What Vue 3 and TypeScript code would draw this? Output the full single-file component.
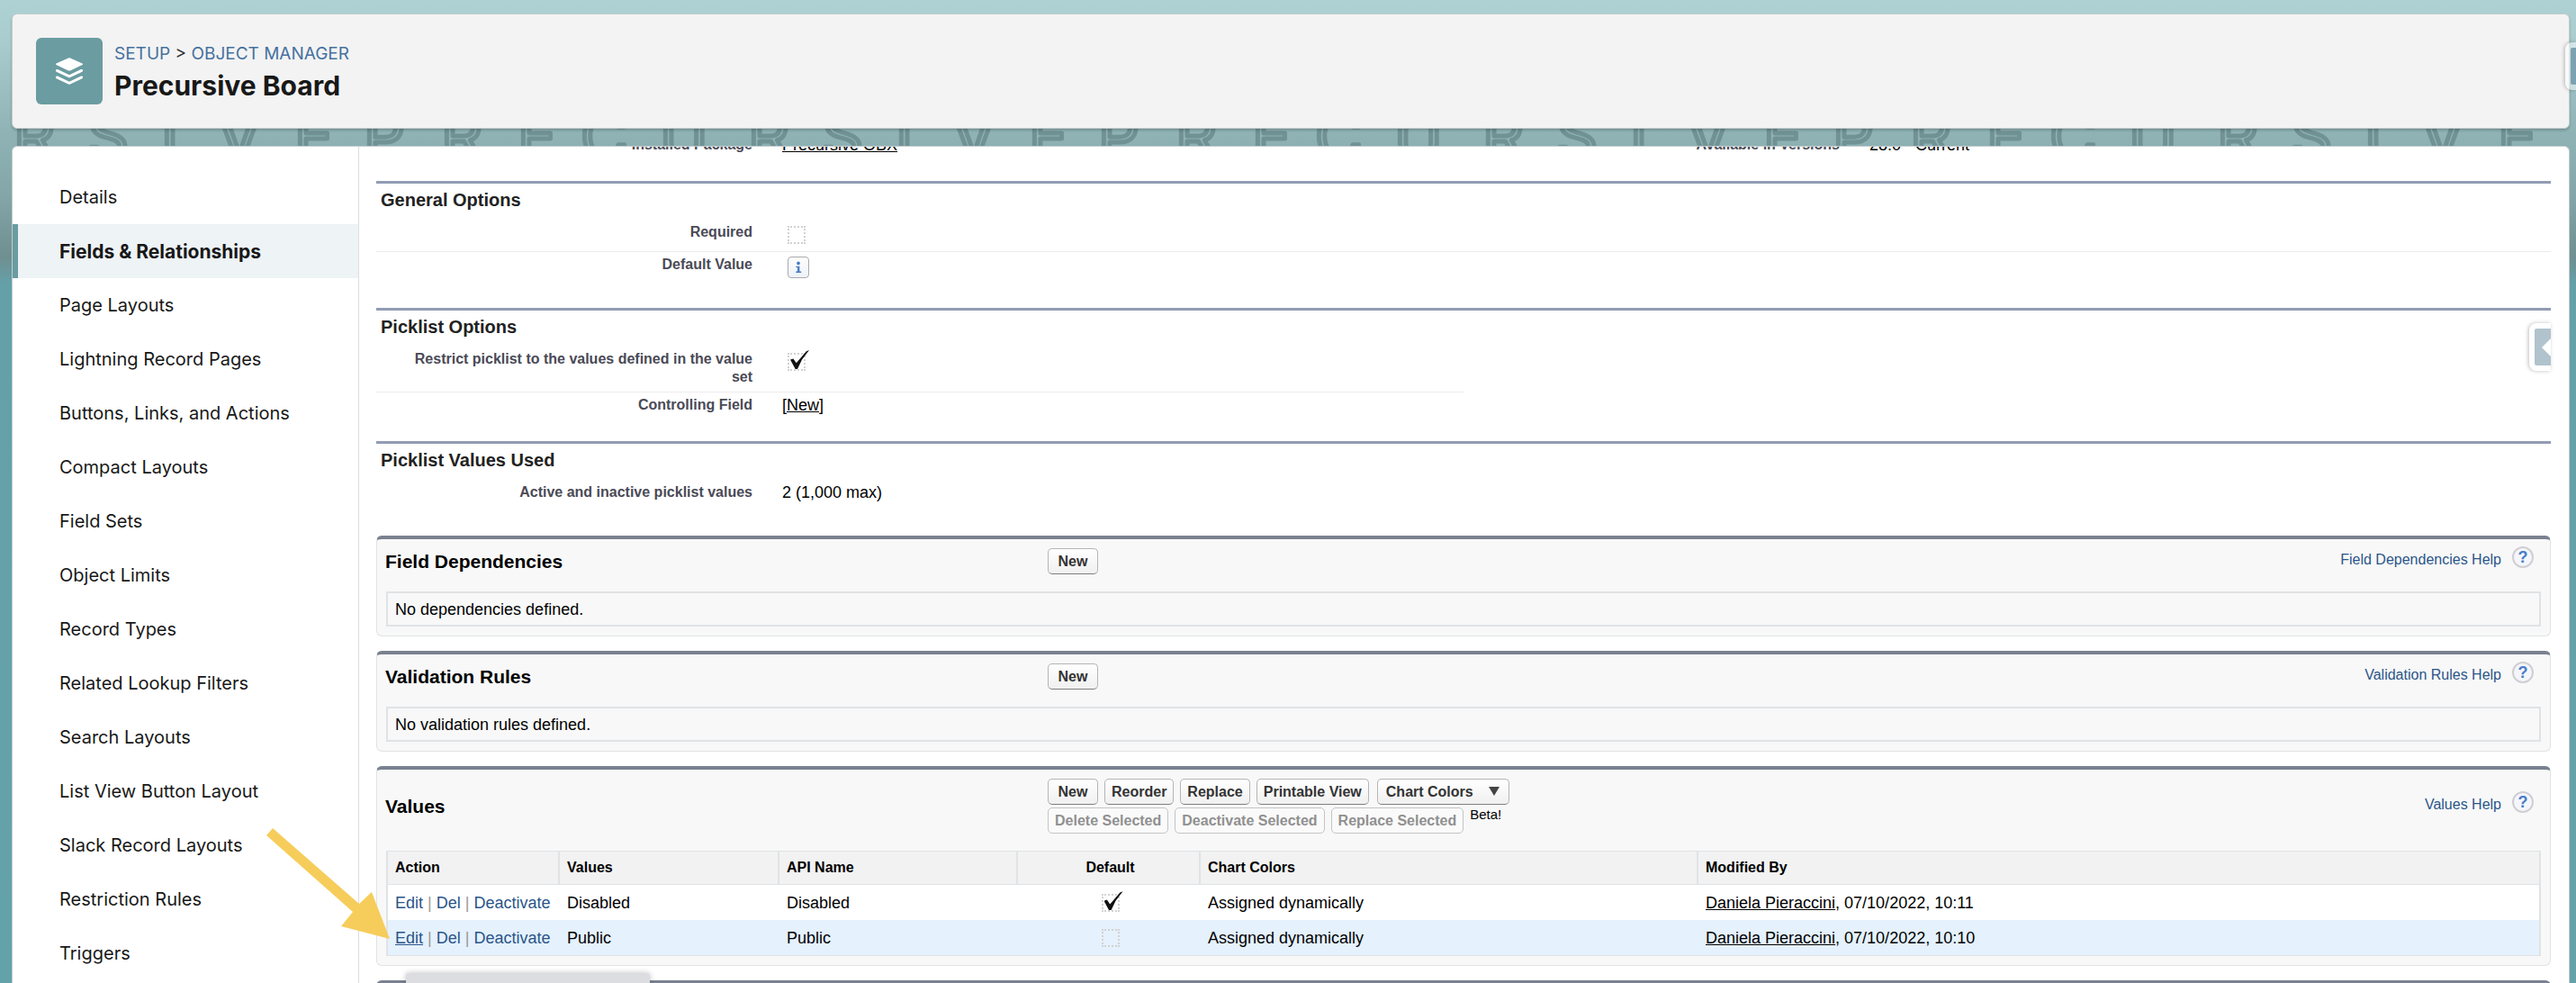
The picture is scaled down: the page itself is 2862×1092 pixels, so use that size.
<script setup lang="ts">
interface Button {
  label: string
  disabled?: boolean
  menu?: boolean
}

interface PicklistValue {
  name: string
  api: string
  isDefault: boolean
  modified: string
  active: boolean
}

const navItems: string[] = [
  'Details',
  'Fields & Relationships',
  'Page Layouts',
  'Lightning Record Pages',
  'Buttons, Links, and Actions',
  'Compact Layouts',
  'Field Sets',
  'Object Limits',
  'Record Types',
  'Related Lookup Filters',
  'Search Layouts',
  'List View Button Layout',
  'Slack Record Layouts',
  'Restriction Rules',
  'Triggers',
]
const currentItem = 'Fields & Relationships'

const emptyLists = [
  { title: 'Field Dependencies', message: 'No dependencies defined.' },
  { title: 'Validation Rules', message: 'No validation rules defined.' },
]

const valueButtons: Button[][] = [
  [
    { label: 'New' },
    { label: 'Reorder' },
    { label: 'Replace' },
    { label: 'Printable View' },
    { label: 'Chart Colors', menu: true },
  ],
  [
    { label: 'Delete Selected', disabled: true },
    { label: 'Deactivate Selected', disabled: true },
    { label: 'Replace Selected', disabled: true },
  ],
]

const values: PicklistValue[] = [
  { name: 'Disabled', api: 'Disabled', isDefault: true, modified: '07/10/2022, 10:11', active: false },
  { name: 'Public', api: 'Public', isDefault: false, modified: '07/10/2022, 10:10', active: true },
]
</script>

<template>
  <div class="page">
    <header class="header">
      <span class="app-icon">
        <svg viewBox="0 0 32 32" width="32" height="32" fill="#fff" aria-hidden="true">
          <path d="M15 1.400Q16 1 17 1.400L30.500 7.500Q31.800 8.300 30.500 9.100L17 15.400Q16 15.800 15 15.400L1.500 9.100Q.2 8.300 1.500 7.500Z" />
          <path d="M3 14L16 20.200L29 14Q30.200 13.600 31 14.600Q31.500 16 30.400 16.700L17 23Q16 23.400 15 23L1.600 16.700Q.5 16 1 14.600Q1.800 13.600 3 14Z" />
          <path d="M3 21.500L16 27.700L29 21.500Q30.200 21.100 31 22.100Q31.500 23.500 30.400 24.200L17 30.500Q16 30.900 15 30.500L1.600 24.200Q.5 23.500 1 22.100Q1.800 21.100 3 21.500Z" />
        </svg>
      </span>
      <div class="heading">
        <nav class="crumbs" aria-label="Breadcrumb">
          <a href="#setup">SETUP</a> &gt; <a href="#objects">OBJECT MANAGER</a>
        </nav>
        <h1>Precursive Board</h1>
      </div>
      <button class="edge-tab header-tab" type="button" aria-label="Open panel"><span></span></button>
    </header>

    <div class="band" aria-hidden="true">
      <svg width="100%" height="19">
        <defs>
          <pattern id="wordmark" width="816" height="80" x="-12" patternUnits="userSpaceOnUse">
            <text y="34" x="14 96 178 240 326 403 489 574 644 732">RSIVEPRECU</text>
          </pattern>
        </defs>
        <rect width="100%" height="19" fill="url(#wordmark)" />
      </svg>
    </div>

    <div class="main">
      <nav class="sidebar" aria-label="Object settings">
        <a
          v-for="item in navItems"
          :key="item"
          href="#"
          :class="{ current: item === currentItem }"
          >{{ item }}</a
        >
      </nav>

      <main class="content">
        <div class="scrolled">
          <section class="details first">
            <div class="row">
              <div class="pair">
                <span class="label">Installed Package</span>
                <span class="value"><a class="plain" href="#package">Precursive OBX</a></span>
              </div>
              <div class="pair">
                <span class="label">Available in Versions</span>
                <span class="value">28.0 - Current</span>
              </div>
            </div>
          </section>

          <section class="details">
            <h3>General Options</h3>
            <div class="row">
              <div class="pair">
                <label class="label" for="required">Required</label>
                <span class="value control"><input id="required" type="checkbox" disabled /></span>
              </div>
            </div>
            <div class="row">
              <div class="pair">
                <span class="label">Default Value</span>
                <span class="value control">
                  <button class="info" type="button" aria-label="Default value info">
                    <svg viewBox="0 0 24 24" width="22" height="22" fill="#4a7cc4" aria-hidden="true">
                      <circle cx="12" cy="7" r="2" />
                      <path d="M9 10.500H13.500V17H15.500V18.500H9V17H10.800V12H9Z" />
                    </svg>
                  </button>
                </span>
              </div>
            </div>
          </section>

          <section class="details">
            <h3>Picklist Options</h3>
            <div class="row half">
              <div class="pair">
                <label class="label" for="restrict">Restrict picklist to the values defined in the value set</label>
                <span class="value control"><input id="restrict" type="checkbox" checked disabled /></span>
              </div>
            </div>
            <div class="row half">
              <div class="pair">
                <span class="label">Controlling Field</span>
                <span class="value">[<a class="plain" href="#new">New</a>]</span>
              </div>
            </div>
          </section>

          <section class="details">
            <h3>Picklist Values Used</h3>
            <div class="row">
              <div class="pair">
                <span class="label">Active and inactive picklist values</span>
                <span class="value">2 (1,000 max)</span>
              </div>
            </div>
          </section>

          <div class="cards">
            <section v-for="list in emptyLists" :key="list.title" class="card">
              <div class="card-head">
                <h2>{{ list.title }}</h2>
                <div class="buttons"><button class="btn" type="button">New</button></div>
                <a class="help" href="#help">{{ list.title }} Help <span class="help-icon">?</span></a>
              </div>
              <p class="empty">{{ list.message }}</p>
            </section>

            <section class="card">
              <div class="card-head">
                <h2>Values</h2>
                <div class="button-rows">
                  <div v-for="(group, i) in valueButtons" :key="i" class="buttons">
                    <button
                      v-for="b in group"
                      :key="b.label"
                      class="btn"
                      :class="{ menu: b.menu }"
                      type="button"
                      :disabled="b.disabled"
                      :aria-haspopup="b.menu ? 'menu' : undefined"
                    >
                      {{ b.label }}
                      <svg v-if="b.menu" viewBox="0 0 14 11" width="14" height="11" aria-hidden="true">
                        <path d="M1 0H13L7 10Z" fill="#444" />
                      </svg>
                    </button>
                    <span v-if="i === 1" class="beta">Beta!</span>
                  </div>
                </div>
                <a class="help" href="#help">Values Help <span class="help-icon">?</span></a>
              </div>
              <table>
                <colgroup>
                  <col class="c-action" />
                  <col class="c-values" />
                  <col class="c-api" />
                  <col class="c-default" />
                  <col class="c-colors" />
                  <col />
                </colgroup>
                <thead>
                  <tr>
                    <th scope="col">Action</th>
                    <th scope="col">Values</th>
                    <th scope="col">API Name</th>
                    <th scope="col" class="center">Default</th>
                    <th scope="col">Chart Colors</th>
                    <th scope="col">Modified By</th>
                  </tr>
                </thead>
                <tbody>
                  <tr v-for="v in values" :key="v.api" :class="{ active: v.active }">
                    <td class="actions">
                      <a href="#edit">Edit</a> <i>|</i> <a href="#del">Del</a> <i>|</i> <a href="#deactivate">Deactivate</a>
                    </td>
                    <td>{{ v.name }}</td>
                    <td>{{ v.api }}</td>
                    <td class="center">
                      <input type="checkbox" :checked="v.isDefault" disabled :aria-label="`${v.name} is default`" />
                    </td>
                    <td>Assigned dynamically</td>
                    <td><a class="plain" href="#user">Daniela Pieraccini</a>, {{ v.modified }}</td>
                  </tr>
                </tbody>
              </table>
            </section>

            <section class="card next"></section>
          </div>
        </div>
        <button class="edge-tab content-tab" type="button" aria-label="Open help panel">
          <span>
            <svg viewBox="0 0 10 20" width="10" height="20" aria-hidden="true"><path d="M10 0V20L0 10Z" fill="#fff" /></svg>
          </span>
        </button>
      </main>
    </div>

    <div class="status"></div>

    <svg class="arrow" viewBox="0 0 138 124" width="138" height="124" aria-hidden="true">
      <path d="M7 0L103 84L117 71L137 123L83 109L96 93L0 8Z" fill="#f6cd5b" />
    </svg>
  </div>
</template>

<style>
body {
  margin: 0;
}
</style>

<style scoped>
.page {
  position: relative;
  box-sizing: border-box;
  display: flex;
  flex-direction: column;
  height: 100vh;
  overflow: hidden;
  padding: 15px 7px 0 13px;
  color: #000;
  font-family: 'Liberation Sans', Arial, sans-serif;
  font-size: 18px;
  line-height: 20px;
  background: linear-gradient(#aed2d4 0, #aacdcf 40px, #8fb3b5 150px, #83a5a8 220px, #6f8f90 285px, #64a0a8 315px, #64a2aa 100%);
}

a {
  color: #2a5589;
  text-decoration: none;
}

.plain {
  color: #000;
  text-decoration: underline;
}

.header {
  position: relative;
  z-index: 1;
  display: flex;
  align-items: center;
  gap: 13px;
  flex: none;
  box-sizing: border-box;
  height: 128px;
  padding-left: 26px;
  border: 1px solid #c3cccd;
  border-radius: 6px;
  background: #f3f3f3;
  box-shadow: 0 2px 3px rgba(0, 0, 0, 0.2);
}

.app-icon {
  display: grid;
  place-items: center;
  width: 74px;
  height: 74px;
  border-radius: 6px;
  background: #6a9ca1;
}

.heading {
  padding-top: 2px;
  font-family: Inter, sans-serif;
}

.crumbs {
  color: #333;
  font-size: 19px;
  line-height: 28px;
}

.crumbs a {
  color: #46719f;
}

h1 {
  margin: 1px 0 0;
  color: #181818;
  font-size: 30px;
  font-weight: 700;
  line-height: 40px;
}

.edge-tab {
  position: absolute;
  box-sizing: border-box;
  height: 53px;
  padding: 6px 0 6px 6px;
  border: 0;
  border-radius: 8px 0 0 8px;
  background: #fff;
  box-shadow: -1px 0 4px rgba(0, 0, 0, 0.25);
}

.edge-tab span {
  display: flex;
  align-items: center;
  justify-content: flex-end;
  height: 41px;
  border-radius: 2px 0 0 2px;
  background: #b1c3cd;
}

.header-tab {
  top: 31px;
  right: -8px;
  width: 12px;
  background: rgba(255, 255, 255, 0.5);
}

.header-tab span {
  background: #7ba2b1;
}

.content-tab {
  top: 196px;
  right: 20px;
  width: 24px;
}

.band {
  flex: none;
  height: 19px;
  overflow: hidden;
}

.band svg {
  display: block;
}

.band text {
  fill: none;
  stroke: #719295;
  stroke-width: 5px;
  stroke-linejoin: round;
  font-family: Inter, sans-serif;
  font-size: 72px;
  font-weight: 400;
}

.main {
  display: flex;
  flex: 1;
  min-height: 0;
  border: 1px solid #c3cccd;
  border-bottom: 0;
  border-radius: 6px 6px 0 0;
  background: #fff;
}

.sidebar {
  flex: none;
  box-sizing: border-box;
  width: 385px;
  padding-top: 26px;
  border-right: 1px solid #dddddf;
  overflow: hidden;
}

.sidebar a {
  display: block;
  box-sizing: border-box;
  height: 60px;
  padding-left: 46px;
  border-left: 6px solid transparent;
  color: #181818;
  font-family: Inter, sans-serif;
  font-size: 20px;
  line-height: 61px;
}

.sidebar a.current {
  border-left-color: #6a9ca1;
  background: #eef3f6;
  font-size: 21px;
  font-weight: 700;
}

.content {
  position: relative;
  flex: 1;
  min-width: 0;
  padding: 0 20px 0 19px;
  overflow: hidden;
}

.scrolled {
  margin-top: -16px;
}

.details {
  padding-bottom: 24px;
  border-top: 3px solid #929cb3;
}

.details.first {
  border-top: 0;
}

h3 {
  margin: 0;
  padding: 8px 5px 12px;
  color: #222;
  font-size: 20px;
  line-height: 20px;
}

.row {
  display: flex;
  padding: 4px 0 6px;
  border-bottom: 1px solid #ececec;
}

.row:last-child {
  border-bottom: 0;
}

.row.half {
  width: 50%;
}

.pair {
  display: flex;
  flex: none;
  width: 50%;
}

.half .pair {
  width: 100%;
}

.label {
  box-sizing: border-box;
  flex: none;
  width: 418px;
  padding-left: 20px;
  color: #4a4a56;
  font-size: 16px;
  font-weight: 700;
  text-align: right;
}

.value {
  padding-left: 33px;
}

.control {
  display: flex;
  align-items: flex-start;
  padding: 0 0 2px 39px;
}

input[type='checkbox'] {
  display: inline-block;
  appearance: none;
  box-sizing: border-box;
  width: 20px;
  height: 20px;
  margin: 3px 0 0;
  border: 2px dotted #d2d2d2;
  vertical-align: middle;
}

td input[type='checkbox'] {
  margin: 0;
}

input[type='checkbox']:checked {
  position: relative;
}

input[type='checkbox']:checked::after {
  content: '';
  position: absolute;
  left: 1px;
  top: -5px;
  width: 21px;
  height: 21px;
  background: #111;
  clip-path: polygon(0 50%, 16% 45%, 32% 68%, 85% 6%, 100% 0, 62% 50%, 38% 100%, 27% 100%);
}

.info {
  display: grid;
  place-items: center;
  width: 24px;
  height: 24px;
  margin: 1px 0;
  padding: 0;
  border: 1px solid #aaa;
  border-radius: 4px;
  background: linear-gradient(#fdfdfd, #eef2f8);
}

.cards {
  display: flex;
  flex-direction: column;
  gap: 16px;
  padding-top: 8px;
}

.card {
  border: 1px solid #e0e3e5;
  border-top: 4px solid #7a8190;
  border-radius: 6px;
  background: #f8f8f8;
}

.next {
  min-height: 107px;
}

.card-head {
  display: grid;
  grid-template-columns: 736px 1fr auto;
  align-items: center;
  padding: 10px 18px 19px 9px;
}

h2 {
  margin: 0;
  font-size: 21px;
  line-height: 24px;
}

.button-rows {
  display: grid;
  gap: 3px;
}

.buttons {
  display: flex;
  gap: 7px;
}

.btn {
  box-sizing: border-box;
  min-width: 56px;
  height: 29px;
  padding: 0 7px;
  border: 1px solid #b5b5b5;
  border-bottom-color: #7f7f7f;
  border-radius: 5px;
  color: #333;
  background: linear-gradient(#fff, #f0f0f0);
  font: 700 16px/20px 'Liberation Sans', Arial, sans-serif;
}

.btn:disabled {
  border-color: #c4c4c4;
  color: #909090;
  background: #fafafa;
}

.btn.menu {
  display: flex;
  align-items: center;
  gap: 16px;
  margin-left: 2px;
  padding: 0 9px;
}

.beta {
  font-size: 15px;
  line-height: 16px;
}

.help {
  display: flex;
  align-items: center;
  gap: 12px;
  padding-bottom: 4px;
  font-size: 16px;
}

.help-icon {
  box-sizing: border-box;
  width: 24px;
  height: 24px;
  margin-top: -6px;
  border: 2px solid #cfcfd3;
  border-radius: 50%;
  color: #4a7cc9;
  background: #f4f6fb;
  font-size: 18px;
  font-weight: 700;
  line-height: 20px;
  text-align: center;
}

.empty {
  margin: 0 10px 10px;
  padding: 8px 8px 7px;
  border: 2px solid #e0e3e5;
}

table {
  box-sizing: border-box;
  width: calc(100% - 20px);
  margin: 0 10px 10px;
  border: 1px solid #e0e3e5;
  border-right-width: 2px;
  border-left: 0;
  border-spacing: 0;
  table-layout: fixed;
  background: #fff;
}

.c-action {
  width: 191px;
}

.c-values {
  width: 244px;
}

.c-api {
  width: 265px;
}

.c-default {
  width: 203px;
}

.c-colors {
  width: 553px;
}

th,
td {
  box-sizing: border-box;
  padding: 0 0 0 8px;
  text-align: left;
}

th {
  height: 37px;
  border-bottom: 1px solid #e0e3e5;
  border-left: 2px solid #e0e3e5;
  background: #f2f2f2;
  font-size: 16px;
}

td {
  height: 39px;
  border-left: 2px solid transparent;
}

td:first-child {
  border-left-color: #e0e3e5;
}

td.actions {
  white-space: nowrap;
}

td i {
  color: #999;
  font-style: normal;
}

.center {
  padding: 0 0 0 4px;
  text-align: center;
}

tr.active td {
  background: #e5f1fd;
}

tr.active td.actions a:first-child {
  text-decoration: underline;
}

.status {
  position: absolute;
  bottom: 0;
  left: 451px;
  width: 271px;
  height: 11px;
  border-radius: 3px 3px 0 0;
  background: #dcdde0;
  box-shadow: 0 0 6px rgba(0, 0, 0, 0.25);
}

.arrow {
  position: absolute;
  top: 920px;
  left: 296px;
}
</style>
